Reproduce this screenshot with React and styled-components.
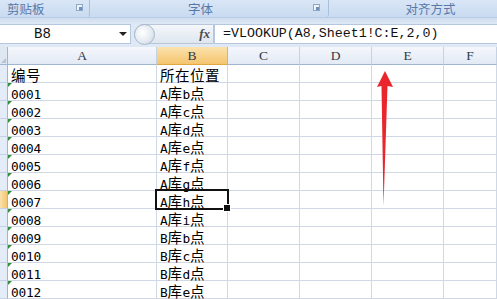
import React from "react";
import styled, { createGlobalStyle, css } from "styled-components";

const Global = createGlobalStyle`
  html, body { margin: 0; padding: 0; background: #fff; overflow: hidden; }
  body { width: 497px; height: 299px; }
  * { box-sizing: border-box; }
`;

const Page = styled.div`
  position: relative;
  width: 497px;
  height: 299px;
  overflow: hidden;
  display: flex;
  flex-direction: column;
  background: #fff;
`;

const Ribbon = styled.div`
  display: flex;
  height: 18px;
  background: linear-gradient(#d9e6f6, #c9dbf1);
  border-bottom: 1px solid #b6cbe6;
`;

const Group = styled.div`
  position: relative;
  flex: 0 0 ${(p) => p.$w}px;
  display: flex;
  align-items: center;
  justify-content: ${(p) => (p.$left ? "flex-start" : "center")};
  padding-left: ${(p) => p.$pl || 0}px;
  padding-right: ${(p) => p.$pr || 0}px;
  margin-right: 3px;
  border-right: 1px solid #a9c0de;
  border-radius: 0 0 3px 3px;
  font-family: "Noto Sans CJK SC", sans-serif;
  font-size: 12.5px;
  color: #5878a8;
  line-height: 17px;
  white-space: nowrap;
`;

const Launcher = styled.span`
  position: absolute;
  right: ${(p) => p.$r}px;
  top: 4px;
  width: 7px;
  height: 7px;
  border: 1px solid #8fa8c8;
  background: #eef3fa;
  &::after {
    content: "";
    position: absolute;
    right: 0;
    bottom: 0;
    width: 3px;
    height: 3px;
    background: #6f8fb8;
  }
`;

const Band = styled.div`
  height: 6px;
  background: linear-gradient(#cfddf0, #dfe9f6);
`;

const FormulaBar = styled.div`
  display: flex;
  align-items: stretch;
  height: 21px;
  background: #dfe9f6;
`;

const NameBox = styled.div`
  flex: 0 0 131px;
  display: flex;
  align-items: center;
  background: #fff;
  border: 1px solid #b5c7de;
  border-left: none;
  font-family: "Liberation Mono", monospace;
  font-size: 14px;
  color: #111;
`;

const NameText = styled.span`
  flex: 1;
  text-align: center;
  margin-right: 34px;
`;

const DropArrow = styled.span`
  width: 0;
  height: 0;
  margin-right: 3px;
  border-left: 4px solid transparent;
  border-right: 4px solid transparent;
  border-top: 4px solid #222;
`;

const Pill = styled.div`
  flex: 0 0 80px;
  margin-left: 3px;
  display: flex;
  align-items: center;
  justify-content: flex-end;
  position: relative;
  background: linear-gradient(#f4f7fb, #dfe6ef);
  border: 1px solid #b8c6d8;
  border-radius: 10px 0 0 10px;
  padding-right: 3px;
`;

const Grip = styled.span`
  position: absolute;
  left: -1px;
  top: -1px;
  width: 21px;
  height: 21px;
  border-radius: 50%;
  border: 1px solid #a9b8cb;
  background: radial-gradient(circle at 40% 40%, #ffffff 0%, #e5ebf2 55%, #c3cedc 100%);
`;

const Fx = styled.span`
  font-family: "Liberation Serif", serif;
  font-style: italic;
  font-weight: bold;
  font-size: 13px;
  color: #4a4a4a;
`;

const FormulaInput = styled.div`
  flex: 1;
  display: flex;
  align-items: center;
  background: #fff;
  border: 1px solid #b5c7de;
  border-right: none;
  padding-left: 8px;
  font-family: "Liberation Mono", monospace;
  font-size: 13.3px;
  color: #111;
  white-space: nowrap;
`;

const Gap = styled.div`
  height: 3px;
  background: #dfe9f6;
`;

const Sheet = styled.div`
  display: grid;
  grid-template-columns: 8px 149px 71px 72px 72px 72px 1fr;
  grid-auto-rows: 18px;
`;

const ColHead = styled.div`
  display: flex;
  align-items: center;
  justify-content: center;
  font-family: "Liberation Serif", serif;
  font-size: 13.5px;
  color: #2f3a4a;
  border-right: 1px solid #c5d2e3;
  border-bottom: 1px solid #9eb6ce;
  ${(p) =>
    p.$active
      ? css`
          background: linear-gradient(#fbe2ac, #f4c56f);
          border-right-color: #e3b35a;
          border-bottom-color: #e0a83e;
        `
      : css`
          background: linear-gradient(#f4f7fc, #e3eaf5);
        `}
`;

const Corner = styled.div`
  background: #dfe7f2;
  border-right: 1px solid #9eb6ce;
  border-bottom: 1px solid #9eb6ce;
  position: relative;
  &::after {
    content: "";
    position: absolute;
    right: 1px;
    bottom: 1px;
    border-left: 5px solid transparent;
    border-bottom: 5px solid #b4c3d6;
  }
`;

const RowHead = styled.div`
  border-right: 1px solid #9eb6ce;
  border-bottom: 1px solid #c5d2e3;
  ${(p) =>
    p.$active
      ? css`
          background: linear-gradient(90deg, #fbe2ac, #f4c56f);
        `
      : css`
          background: #e4ecf7;
        `}
`;

const Cell = styled.div`
  position: relative;
  display: flex;
  align-items: flex-start;
  padding: 1px 0 0 3px;
  border-right: 1px solid #d0d7e5;
  border-bottom: 1px solid #d0d7e5;
  color: #000;
  white-space: nowrap;
  ${(p) =>
    p.$flag &&
    css`
      &::before {
        content: "";
        position: absolute;
        left: 0;
        top: 0;
        border-right: 4px solid transparent;
        border-top: 4px solid #2f8f3a;
      }
    `}
  ${(p) =>
    p.$selected &&
    css`
      z-index: 2;
      outline: 2px solid #111;
      outline-offset: -1px;
      margin: -1px 0 0 -1px;
      padding: 2px 0 0 4px;
      &::after {
        content: "";
        position: absolute;
        right: -4px;
        bottom: -4px;
        width: 6px;
        height: 6px;
        background: #111;
        border: 1px solid #fff;
      }
    `}
`;

const CellText = styled.span`
  display: block;
  font-family: "Noto Sans CJK SC", sans-serif;
  font-size: 14.5px;
  line-height: 17px;
  letter-spacing: 0.5px;
`;

const Latin = styled.span`
  font-family: "DejaVu Sans Mono", monospace;
  font-size: 12.8px;
  letter-spacing: -0.2px;
`;

const Arrow = styled.svg`
  position: absolute;
  left: 370px;
  top: 66px;
  pointer-events: none;
`;

function Mixed({ text }) {
  const parts = text.match(/[\u4e00-\u9fff]+|[^\u4e00-\u9fff]+/g) || [];
  return (
    <CellText>
      {parts.map((p, i) =>
        /[\u4e00-\u9fff]/.test(p) ? p : <Latin key={i}>{p}</Latin>
      )}
    </CellText>
  );
}

const rows = [
  ["编号", "所在位置"],
  ["0001", "A库b点"],
  ["0002", "A库c点"],
  ["0003", "A库d点"],
  ["0004", "A库e点"],
  ["0005", "A库f点"],
  ["0006", "A库g点"],
  ["0007", "A库h点"],
  ["0008", "A库i点"],
  ["0009", "B库b点"],
  ["0010", "B库c点"],
  ["0011", "B库d点"],
  ["0012", "B库e点"],
];

const cols = ["A", "B", "C", "D", "E", "F"];

export default function App() {
  return (
    <Page>
      <Global />
      <Ribbon>
        <Group $w={90} $left $pl={7}>
          剪贴板
          <Launcher $r={6} />
        </Group>
        <Group $w={236} $pr={20}>
          字体
          <Launcher $r={8} />
        </Group>
        <Group $w={198}>对齐方式</Group>
      </Ribbon>
      <Band />
      <FormulaBar>
        <NameBox>
          <NameText>B8</NameText>
          <DropArrow />
        </NameBox>
        <Pill>
          <Grip />
          <Fx>fx</Fx>
        </Pill>
        <FormulaInput>=VLOOKUP(A8,Sheet1!C:E,2,0)</FormulaInput>
      </FormulaBar>
      <Gap />
      <Sheet>
        <Corner />
        {cols.map((c) => (
          <ColHead key={c} $active={c === "B"}>
            {c}
          </ColHead>
        ))}
        {rows.map((r, i) => (
          <React.Fragment key={i}>
            <RowHead $active={i === 7} />
            <Cell $flag={i > 0}>
              <Mixed text={r[0]} />
            </Cell>
            <Cell $selected={i === 7}>
              <Mixed text={r[1]} />
            </Cell>
            <Cell />
            <Cell />
            <Cell />
            <Cell />
          </React.Fragment>
        ))}
      </Sheet>
      <Arrow width="30" height="145" viewBox="0 0 30 145">
        <path d="M15 5 L23 21 L17.5 20 L13.5 140 L11.5 20 L7 21 Z" fill="#e8262b" />
      </Arrow>
    </Page>
  );
}
